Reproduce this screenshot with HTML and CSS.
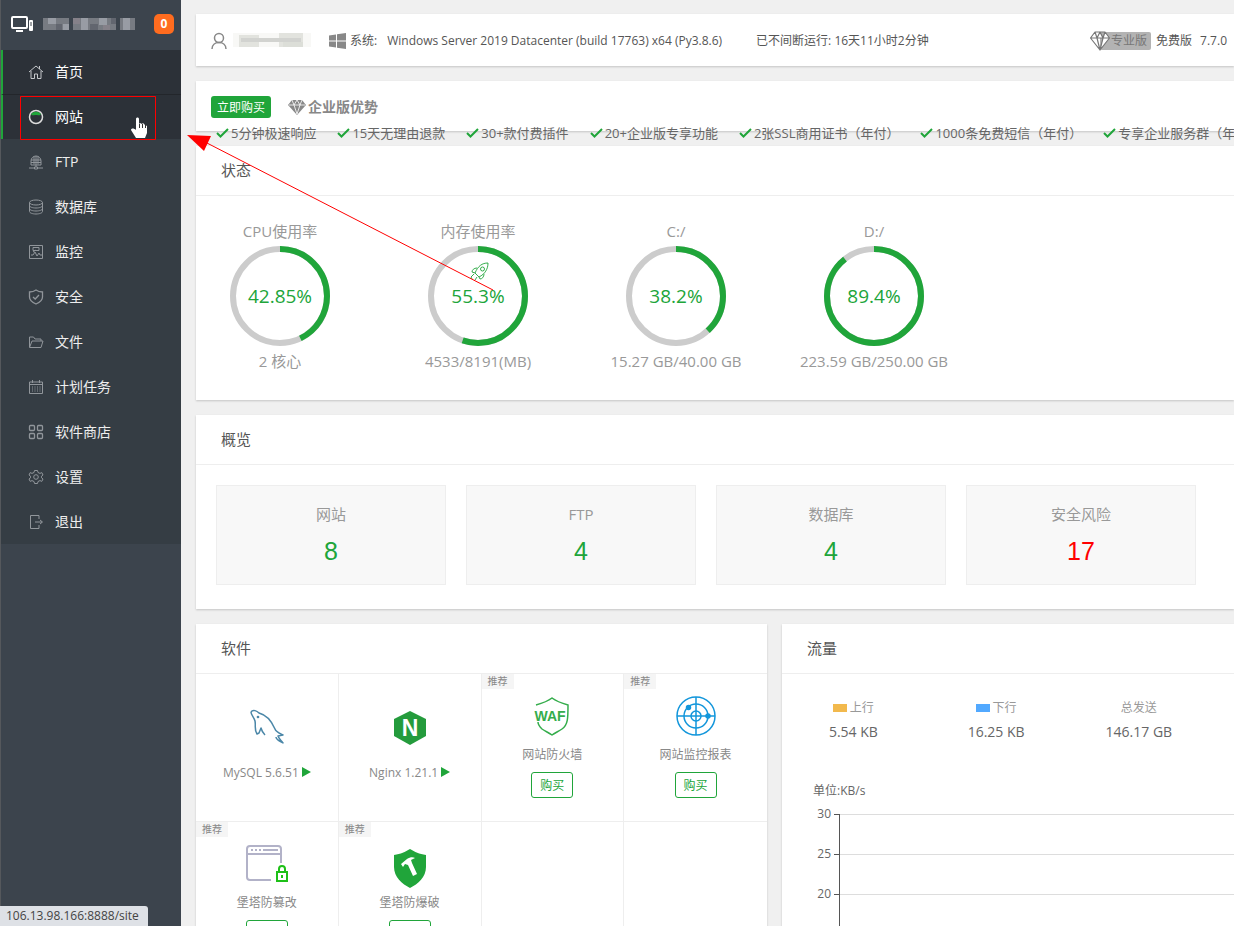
FILE: index.html
```html
<!DOCTYPE html>
<html lang="zh-CN">
<head>
<meta charset="utf-8">
<title>面板首页</title>
<link rel="stylesheet" href="styles.css">
</head>
<body>
<div class="app">
  <aside class="sidebar">
    <div class="brand">
      <svg class="brand-icon" width="24" height="18" viewBox="0 0 24 18" fill="none" stroke="#fff" stroke-width="2"><rect x="1" y="2" width="15" height="11" rx="1"/><path d="M5 16h7"/><rect x="18" y="5" width="4" height="11" rx="1" fill="#fff" stroke="none"/><path d="M20 7v4" stroke="#3c444d" stroke-width="1"/></svg>
      <svg class="brand-name" width="92" height="14" viewBox="0 0 92 14" shape-rendering="crispEdges"><path fill="#777b82" d="M0 1h92v12H0z"/><path fill="#989ca4" d="M5 1h8v6H5zM20 7h6v6h-6zM38 1h7v12h-7zM56 1h8v7h-8zM80 1h7v12h-7z"/><path fill="#62666f" d="M13 7h6v6h-6zM47 7h8v6h-8zM68 1h6v6h-6z"/><path fill="#858189" d="M30 1h7v6h-7zM60 8h7v5h-7z"/><path fill="#3c444d" d="M26 1h4v12h-4zM73 1h4v12h-4z"/></svg>
      <span class="badge">0</span>
    </div>
    <nav class="menu">
      <a class="item active" href="#"><svg class="ico" viewBox="0 0 16 16"><path d="M1 8 8 2l7 6M3 7v7.500h3.500V10h3v4.500H13V7M11.500 2v3"/></svg>首页</a>
      <a class="item active hover" href="#"><svg class="ico" viewBox="0 0 16 16"><circle cx="8" cy="8" r="6.500" stroke="#ddd" stroke-width="1.500"/><path d="M3 5c3-3 7-3 10 0-1 2-2 1-5 1S4 7 3 5" fill="#20a53a" stroke="none"/></svg>网站</a>
      <a class="item" href="#"><svg class="ico" viewBox="0 0 16 16"><path d="M3 11V7a5 5 0 0 1 10 0v4zM3 6h10M3 8.500h10M6 2.500v8M8 2v11M10 2.500v8M1 14h5.500M9.500 14H15M6.500 13h3v2h-3z"/></svg>FTP</a>
      <a class="item" href="#"><svg class="ico" viewBox="0 0 16 16"><ellipse cx="8" cy="3.500" rx="6.500" ry="2.500"/><path d="M1.500 3.500v9c0 1.400 3 2.500 6.500 2.500s6.500-1.100 6.500-2.500v-9M1.500 6.500C1.500 8 4.500 9 8 9s6.500-1 6.500-2.500M1.500 9.500C1.500 11 4.500 12 8 12s6.500-1 6.500-2.500"/></svg>数据库</a>
      <a class="item" href="#"><svg class="ico" viewBox="0 0 16 16"><path d="M1.500 1.500h13v13h-13zM3 11h2l2-3 2 4 2-3 1 2h2M5 3.500h6v3H5zM5 8l3-2"/></svg>监控</a>
      <a class="item" href="#"><svg class="ico" viewBox="0 0 16 16"><path d="M8 1c2 1.500 4 2 6.500 2v5c0 3-3 5.500-6.500 7-3.500-1.500-6.500-4-6.500-7V3C4 3 6 2.500 8 1zM5 8l2.200 2L11 6" stroke-width="1.300"/></svg>安全</a>
      <a class="item" href="#"><svg class="ico" viewBox="0 0 16 16"><path d="M1.500 13V3h4l1.500 2h6v2M1.500 13.500 4 7h11l-2 6.500z"/></svg>文件</a>
      <a class="item" href="#"><svg class="ico" viewBox="0 0 16 16"><path d="M1.500 3h13v11.500h-13zM1.500 5.500h13M4.500 1v3M11.500 1v3"/><path d="M4 8h9M4 10h9M4 12h9" stroke-dasharray="1 1.500"/></svg>计划任务</a>
      <a class="item" href="#"><svg class="ico" viewBox="0 0 16 16" stroke-width="1.300"><rect x="1.500" y="1.500" width="5" height="5" rx="1"/><rect x="9.500" y="1.500" width="5" height="5" rx="1"/><rect x="1.500" y="9.500" width="5" height="5" rx="1"/><rect x="9.500" y="9.500" width="5" height="5" rx="1"/></svg>软件商店</a>
      <a class="item" href="#"><svg class="ico" viewBox="0 0 16 16"><path d="M6.500 1.500h3l.5 2 2 .9 1.800-.8 1.200 2.400-1.500 1.200v1.600l1.500 1.200-1.200 2.400-1.800-.8-2 .9-.5 2h-3l-.5-2-2-.9-1.800.8L1 10l1.500-1.200V7.200L1 6l1.200-2.400 1.800.8 2-.9z"/><circle cx="8" cy="8" r="2.300"/></svg>设置</a>
      <a class="item" href="#"><svg class="ico" viewBox="0 0 16 16"><path d="M11 5V1.500H2.500v13H11V11M7 8h7M12 6l2.500 2-2.500 2"/></svg>退出</a>
    </nav>
  </aside>

  <main class="main">
    <header class="card topbar">
      <svg width="18" height="18" viewBox="0 0 18 18" fill="none" stroke="#888" stroke-width="1.500"><circle cx="8" cy="6" r="4.500"/><path d="M1 17c0-4 3-6.500 7-6.500s7 2.500 7 6.500"/></svg>
      <svg class="user-name" width="78" height="16" viewBox="0 0 78 16" shape-rendering="crispEdges"><path fill="#f8f8f6" d="M0 0h78v14H0z"/><path fill="#e2e3de" d="M6 2h20v12H6zM46 0h24v14H46z"/><path fill="#d2d3d0" d="M8 5h60v4H8z"/><path fill="#dcded8" d="M50 9h20v5H50z"/></svg>
      <svg class="windows" width="17" height="16" viewBox="0 0 17 16" fill="#888"><path d="M0 2.500 7 1.500v6H0zM8 1.300 17 0v7.500H8zM0 8.500h7v6l-7-1zM8 8.500h9V16l-9-1.300z"/></svg>
      <span class="sys-label">系统:</span>
      <span class="sys">Windows Server 2019 Datacenter (build 17763) x64 (Py3.8.6)</span>
      <span>已不间断运行: 16天11小时2分钟</span>
      <span class="version">
        <svg class="gem" width="20" height="20" viewBox="0 0 20 20" fill="#fff" stroke="#777" stroke-width="1.200" stroke-linejoin="round"><path d="M5 1h10l4.500 6L10 19 .5 7zM.5 7h19M5 1l2 6 3 12 3-12 2-6M7 7l3-6 3 6"/></svg><span class="pro">专业版</span><span>免费版</span><span class="num">7.7.0</span>
      </span>
    </header>

    <section class="card promo">
      <div class="promo-head">
        <button class="buy-now" type="button">立即购买</button>
        <svg width="18" height="16" viewBox="0 0 18 16" fill="#888"><path d="M4 1h10l4 5-9 10L0 6z"/><path d="M1 6h16M4 1l2 5 3 9 3-9 2-5M6 6l3-5 3 5" fill="none" stroke="#fff" stroke-width=".8"/></svg>
        <strong>企业版优势</strong>
      </div>
      <ul class="features">
        <li><svg class="tick" viewBox="0 0 13 10"><path d="m1 5 3.500 3.500L12 1"/></svg>5分钟极速响应</li>
        <li><svg class="tick" viewBox="0 0 13 10"><path d="m1 5 3.500 3.500L12 1"/></svg>15天无理由退款</li>
        <li><svg class="tick" viewBox="0 0 13 10"><path d="m1 5 3.500 3.500L12 1"/></svg>30+款付费插件</li>
        <li><svg class="tick" viewBox="0 0 13 10"><path d="m1 5 3.500 3.500L12 1"/></svg>20+企业版专享功能</li>
        <li><svg class="tick" viewBox="0 0 13 10"><path d="m1 5 3.500 3.500L12 1"/></svg>2张SSL商用证书（年付）</li>
        <li><svg class="tick" viewBox="0 0 13 10"><path d="m1 5 3.500 3.500L12 1"/></svg>1000条免费短信（年付）</li>
        <li><svg class="tick" viewBox="0 0 13 10"><path d="m1 5 3.500 3.500L12 1"/></svg>专享企业服务群（年付）</li>
      </ul>
    </section>

    <section class="card status">
      <h2>状态</h2>
      <div class="gauges">
        <div class="gauge"><span class="cap">CPU使用率</span>
          <svg width="100" height="100" viewBox="0 0 100 100"><circle class="track" cx="50" cy="50" r="47"/><circle class="arc" cx="50" cy="50" r="47" pathLength="100" stroke-dasharray="42.850 100" transform="rotate(-90 50 50)"/><text x="50" y="57">42.85%</text></svg>
          <span class="cap">2 核心</span></div>
        <div class="gauge"><span class="cap">内存使用率</span>
          <svg width="100" height="100" viewBox="0 0 100 100"><circle class="track" cx="50" cy="50" r="47"/><circle class="arc" cx="50" cy="50" r="47" pathLength="100" stroke-dasharray="55.300 100" transform="rotate(-90 50 50)"/><text x="50" y="57">55.3%</text><g fill="none" stroke="#20a53a" stroke-width=".9"><path d="M60 17c-6 0-10 3-13 10l4 4c6-3 9-8 9-14zM49 22c-3 0-5 2-5 4l3 1M56 28c0 3-2 5-4 5l-1-2M46 28l-3 3 1 2M49 31l-2 3"/><circle cx="54.500" cy="23" r="2"/></g></svg>
          <span class="cap">4533/8191(MB)</span></div>
        <div class="gauge"><span class="cap">C:/</span>
          <svg width="100" height="100" viewBox="0 0 100 100"><circle class="track" cx="50" cy="50" r="47"/><circle class="arc" cx="50" cy="50" r="47" pathLength="100" stroke-dasharray="38.200 100" transform="rotate(-90 50 50)"/><text x="50" y="57">38.2%</text></svg>
          <span class="cap">15.27 GB/40.00 GB</span></div>
        <div class="gauge"><span class="cap">D:/</span>
          <svg width="100" height="100" viewBox="0 0 100 100"><circle class="track" cx="50" cy="50" r="47"/><circle class="arc" cx="50" cy="50" r="47" pathLength="100" stroke-dasharray="89.400 100" transform="rotate(-90 50 50)"/><text x="50" y="57">89.4%</text></svg>
          <span class="cap">223.59 GB/250.00 GB</span></div>
      </div>
    </section>

    <section class="card">
      <h2>概览</h2>
      <div class="counts">
        <div class="count"><span>网站</span><a href="#">8</a></div>
        <div class="count"><span>FTP</span><a href="#">4</a></div>
        <div class="count"><span>数据库</span><a href="#">4</a></div>
        <div class="count"><span>安全风险</span><a class="risk" href="#">17</a></div>
      </div>
    </section>

    <div class="halves">
      <section class="card">
        <h2>软件</h2>
        <div class="soft">
          <div class="cell installed">
            <svg width="40" height="40" viewBox="0 0 40 40" fill="none" stroke="#4b87a8" stroke-width="1.500" stroke-linejoin="round"><path d="M4 4c2-3 6-1 8 1 8 2 13 9 16 16 1 3 4 4 8 6l-5 1c1 3 3 4 5 7-3-2-7-3-7-6M4 4c0 3 3 5 4 9 1 5-1 8 2 13l2-1 2-5c1 4 2 5 4 7"/><circle cx="11" cy="9" r=".6"/></svg>
            <span class="name">MySQL 5.6.51<svg class="play" viewBox="0 0 9 10"><path d="M0 0l9 5-9 5z"/></svg></span></div>
          <div class="cell installed">
            <svg width="40" height="40" viewBox="0 0 40 40"><path fill="#249b3c" d="m20 3 16 8v17l-16 9-16-9V11z"/><text class="logo-n" x="20" y="28">N</text></svg>
            <span class="name">Nginx 1.21.1<svg class="play" viewBox="0 0 9 10"><path d="M0 0l9 5-9 5z"/></svg></span></div>
          <div class="cell"><span class="tag">推荐</span>
            <svg width="40" height="40" viewBox="0 0 40 40" fill="none" stroke="#35ad4c" stroke-width="1.500"><path d="M4 9c7-2 12-4 16-7 4 3 9 5 16 7 0 13 0 20-6 24-3 2-7 4-10 6-3-2-7-4-10-6-2-2-4-4-4-7"/><text class="logo-waf" x="18" y="25">WAF</text></svg>
            <span class="name">网站防火墙</span><button class="buy" type="button">购买</button></div>
          <div class="cell"><span class="tag">推荐</span>
            <svg width="40" height="40" viewBox="0 0 40 40" fill="none" stroke="#1296db" stroke-width="1.500"><circle cx="20" cy="20" r="19"/><circle cx="20" cy="20" r="12"/><circle cx="20" cy="20" r="5"/><path d="M20 1v38M1 20h38"/><g fill="#1296db"><circle cx="12.500" cy="11.500" r="2"/><circle cx="32" cy="20" r="2"/></g></svg>
            <span class="name">网站监控报表</span><button class="buy" type="button">购买</button></div>
          <div class="cell"><span class="tag">推荐</span>
            <svg width="44" height="40" viewBox="0 0 44 40" fill="none" stroke="#b2b2c8" stroke-width="2"><path d="M36 19V5a3 3 0 0 0-3-3H5a3 3 0 0 0-3 3v28a3 3 0 0 0 3 3h21M2 10h34"/><path d="M6 6h10" stroke-dasharray="2 2"/><path d="M18 6h15"/><path stroke="#1ec018" d="M32 28h10v9H32zM34 28v-3a3 3 0 0 1 6 0v3M37 31v3"/></svg>
            <span class="name">堡塔防篡改</span><button class="buy" type="button">购买</button></div>
          <div class="cell"><span class="tag">推荐</span>
            <svg width="40" height="40" viewBox="0 0 40 40"><path fill="#20a53a" d="M20 5c5 3 9 5 16 6v12c0 10-8 17-16 21C12 40 4 33 4 23V11c7-1 11-3 16-6z"/><path fill="#fff" d="m11 20 6-5c3-2 6-2 8-1l-4 2 1 3 5 11-4 2-5-11-3-1-2 3z"/></svg>
            <span class="name">堡塔防爆破</span><button class="buy" type="button">购买</button></div>
          <div class="cell"></div>
          <div class="cell"></div>
        </div>
      </section>

      <section class="card">
        <h2>流量</h2>
        <div class="traffic">
          <div class="stat"><span><i class="swatch up"></i>上行</span><b>5.54 KB</b></div>
          <div class="stat"><span><i class="swatch down"></i>下行</span><b>16.25 KB</b></div>
          <div class="stat"><span>总发送</span><b>146.17 GB</b></div>
        </div>
        <div class="chart">
          <p>单位:KB/s</p>
          <svg width="100%" height="130">
            <g stroke="#ddd"><path d="M27 13.500H540M27 53.500H540M27 93.500H540"/></g>
            <g stroke="#555"><path d="M26.500 13v117M21 13.500h5M21 53.500h5M21 93.500h5"/></g>
            <g class="ticks"><text x="18" y="17">30</text><text x="18" y="57">25</text><text x="18" y="97">20</text></g>
          </svg>
        </div>
      </section>
    </div>
  </main>
</div>

<svg class="annotation" width="500" height="300" viewBox="0 0 500 300"><path d="M20.500 96.500h135v43h-135z" fill="none" stroke="red"/><path d="M493 290 205 142" stroke="red"/><path d="m187 135 24 1-7 15z" fill="red"/><path d="M136 119c0-2 3-2 3 0v5l1-1 2 1 1-1 2 2 2 1v7l-2 5h-9l-5-8c0-2 3-2 5 0z" fill="#fff"/><path d="M139.500 124v4M142.500 124v4M145.500 125v3" stroke="#333"/></svg>
<div class="link-status">106.13.98.166:8888/site</div>
</body>
</html>
```
FILE: styles.css
```css
* { box-sizing: border-box; }

body {
  margin: 0;
  background: #f0f0f0;
  color: #666;
  font: 12px/20px "Open Sans", "Noto Sans CJK SC", sans-serif;
}

a { text-decoration: none; }

button { font: inherit; cursor: pointer; }

.app {
  display: flex;
  height: 100vh;
  overflow: hidden;
}

.sidebar {
  flex: 0 0 181px;
  background: #3c444d;
  border-left: 1px solid #55585c;
}

.brand {
  display: flex;
  align-items: center;
  height: 50px;
  padding: 0 7px 2px 10px;
}

.brand-name { margin-left: 8px; }

.badge {
  width: 20px;
  margin-left: auto;
  border-radius: 5px;
  background: #ff6c1f;
  color: #fff;
  font-weight: 700;
  text-align: center;
}

.menu { background: #353d44; }

.item {
  display: flex;
  align-items: center;
  gap: 11px;
  height: 45px;
  padding-left: 27px;
  color: #eee;
  font-size: 14px;
}

.item.active {
  padding-left: 25px;
  border-left: 2px solid #20a53a;
  border-bottom: 1px solid #23262b;
  background: #2c3138;
  color: #fff;
}

.item.hover {
  height: 44px;
  border-bottom: 0;
}

.ico {
  width: 16px;
  height: 16px;
  fill: none;
  stroke: #91969b;
}

.active .ico { stroke: #c5c8cb; }

.main {
  display: flex;
  flex: 1;
  flex-direction: column;
  gap: 15px;
  min-width: 0;
  padding: 14px 0 0 15px;
  overflow: hidden;
}

.card {
  flex-shrink: 0;
  background: #fff;
  box-shadow: 0 1px 2px rgba(0, 0, 0, .18);
}

.topbar {
  display: flex;
  align-items: center;
  height: 52px;
  padding: 2px 7px 0 15px;
  color: #555;
  white-space: nowrap;
}

.user-name { margin-left: 4px; }
.windows { margin-left: 18px; }
.sys-label { margin-left: 4px; }
.sys { margin: 0 34px 0 10px; }

.version {
  display: flex;
  align-items: center;
  margin-left: auto;
}

.gem { z-index: 1; }

.pro {
  margin: 0 5px 0 -10px;
  padding: 0 4px 0 11px;
  border-radius: 2px;
  background: #b3b3b3;
  color: #777;
  line-height: 18px;
}

.num { margin-left: 8px; }

.promo {
  height: 50px;
  padding: 15px 0 0 15px;
}

.promo-head {
  display: flex;
  align-items: center;
  height: 22px;
  color: #888;
  font-size: 14px;
}

.promo-head svg { margin: 0 2px 0 17px; }

.buy-now {
  height: 22px;
  padding: 1px 6px 0;
  border: 0;
  border-radius: 3px;
  background: #20a53a;
  color: #fff;
  font-size: 12px;
  line-height: 21px;
}

.features {
  display: flex;
  gap: 21px;
  margin: 5px 0 0;
  padding-left: 5px;
  list-style: none;
  font-size: 13px;
  white-space: nowrap;
}

.features li { flex: none; }

.tick {
  width: 13px;
  height: 10px;
  margin-right: 2px;
  fill: none;
  stroke: #20a53a;
  stroke-width: 2;
}

h2 {
  margin: 0;
  padding: 0 25px;
  border-bottom: 1px solid #eee;
  color: #555;
  font-size: 15px;
  font-weight: 400;
  line-height: 49px;
}

.gauges {
  display: flex;
  padding: 25px 0 29px;
}

.gauge {
  display: flex;
  flex: 0 0 198px;
  flex-direction: column;
  align-items: center;
  margin-left: -15px;
  margin-right: 15px;
  color: #999;
  font-size: 15px;
}

.cap { white-space: nowrap; }
.gauge svg { margin: 5px 0; }
.gauge .track { fill: none; stroke: #ccc; stroke-width: 6; }
.gauge .arc { fill: none; stroke: #20a53a; stroke-width: 6; }

.gauge text {
  fill: #20a53a;
  font-size: 19px;
  text-anchor: middle;
}

.counts {
  display: flex;
  gap: 20px;
  padding: 20px 20px 24px;
}

.count {
  display: flex;
  flex: 0 0 230px;
  flex-direction: column;
  align-items: center;
  height: 100px;
  padding-top: 18px;
  border: 1px solid #eee;
  background: #f8f8f8;
  color: #999;
  font-size: 15px;
}

.count a {
  margin-top: 9px;
  color: #20a53a;
  font: 25px/36px "Liberation Sans", sans-serif;
}

.count .risk { color: #f00; }

.halves {
  display: grid;
  flex: none;
  grid-template-columns: 1fr 1fr;
  gap: 15px;
  min-width: 1157px;
}

.soft {
  display: grid;
  grid-template-columns: repeat(4, 1fr);
  grid-auto-rows: 148px;
}

.cell {
  position: relative;
  display: flex;
  flex-direction: column;
  align-items: center;
  padding-top: 22px;
  border-right: 1px solid #eee;
  border-bottom: 1px solid #eee;
  color: #888;
}

.cell > svg { overflow: visible; }
.cell:nth-child(4n) { border-right: 0; }
.installed { padding-top: 34px; }
.name { margin-top: 9px; }
.installed .name { margin-top: 15px; }

.play {
  width: 9px;
  height: 10px;
  margin-left: 3px;
  fill: #20a53a;
}

.tag {
  position: absolute;
  top: 0;
  left: 0;
  padding: 0 6px;
  background: #f5f5f5;
  font-size: 10px;
  line-height: 15px;
}

.buy {
  height: 26px;
  margin-top: 7px;
  padding: 1px 8px 0;
  border: 1px solid #20a53a;
  border-radius: 3px;
  background: #fff;
  color: #20a53a;
}

.logo-n {
  fill: #fff;
  font: 700 23px "Liberation Sans", sans-serif;
  text-anchor: middle;
}

.logo-waf {
  fill: #35ad4c;
  stroke: none;
  font: 700 14px "Liberation Sans", sans-serif;
  text-anchor: middle;
}

.traffic {
  display: grid;
  grid-template-columns: repeat(4, 1fr);
  padding-top: 24px;
}

.stat {
  display: flex;
  flex-direction: column;
  align-items: center;
  color: #999;
}

.stat b {
  margin-top: 4px;
  color: #666;
  font-size: 14px;
  font-weight: 400;
}

.swatch {
  display: inline-block;
  width: 14px;
  height: 8px;
  margin-right: 3px;
}

.up { background: #f2b94d; }
.down { background: #52a9ff; }

.chart {
  padding: 39px 31px 0;
}

.chart p { margin: 0; }
.chart svg { display: block; overflow: visible; }

.ticks {
  fill: #666;
  text-anchor: end;
}

.annotation {
  position: absolute;
  top: 0;
  left: 0;
  pointer-events: none;
}

.link-status {
  position: fixed;
  bottom: 0;
  left: 0;
  padding: 0 9px 0 6px;
  border-radius: 0 3px 0 0;
  background: #dee1e6;
  color: #444;
}
```
